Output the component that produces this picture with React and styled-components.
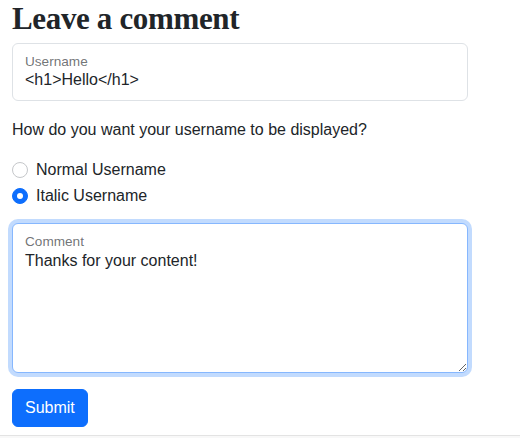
import React from "react";
import styled, { createGlobalStyle } from "styled-components";

const Global = createGlobalStyle`
  * { box-sizing: border-box; }
  html, body { margin: 0; padding: 0; background: #fff; }
  body {
    font-family: "Liberation Sans", Arial, sans-serif;
    font-size: 16px;
    line-height: 1.5;
    color: #212529;
  }
`;

const Page = styled.div`
  display: flex;
  flex-direction: column;
  min-height: 438px;
`;

const Main = styled.main`
  padding: 0 12px;
  width: 480px;
  flex: 1;
`;

const Heading = styled.h1`
  font-family: "Liberation Serif", "Times New Roman", serif;
  font-weight: 700;
  font-size: 31px;
  letter-spacing: -0.35px;
  line-height: 38px;
  margin: 0 0 5px;
  color: #212529;
`;

const Floating = styled.div`
  position: relative;
  margin-bottom: ${(p) => p.$gap || 16}px;
`;

const TextInput = styled.input`
  display: block;
  width: 100%;
  height: 58px;
  padding: 26px 12px 10px;
  font-family: inherit;
  font-size: 16px;
  line-height: 1.5;
  color: #212529;
  background: #fff;
  border: 1px solid #dee2e6;
  border-radius: 6px;
  outline: none;
`;

const TextArea = styled.textarea`
  display: block;
  width: 100%;
  height: 150px;
  padding: 25px 12px 10px;
  font-family: inherit;
  font-size: 16px;
  line-height: 1.5;
  color: #212529;
  background: #fff;
  border: 1px solid #86b7fe;
  border-radius: 6px;
  box-shadow: 0 0 0 4px rgba(13, 110, 253, 0.25);
  outline: none;
  resize: vertical;
`;

const FloatLabel = styled.label`
  position: absolute;
  top: 9px;
  left: 13px;
  font-size: 13.6px;
  line-height: 20px;
  color: rgba(33, 37, 41, 0.65);
  pointer-events: none;
`;

const Question = styled.p`
  margin: 0 0 16px;
`;

const Choices = styled.div`
  display: flex;
  flex-direction: column;
  gap: 2px;
  margin-bottom: 15px;
`;

const Choice = styled.label`
  display: flex;
  align-items: flex-start;
  gap: 8px;
  min-height: 24px;
`;

const Radio = styled.span`
  flex: none;
  width: 16px;
  height: 16px;
  margin-top: 4px;
  border-radius: 50%;
  border: 1px solid ${(p) => (p.$checked ? "#0d6efd" : "#c5c7ca")};
  background: ${(p) => (p.$checked ? "#0d6efd" : "#fff")};
  display: flex;
  align-items: center;
  justify-content: center;
  &::after {
    content: "";
    display: ${(p) => (p.$checked ? "block" : "none")};
    width: 6px;
    height: 6px;
    border-radius: 50%;
    background: #fff;
  }
`;

const Button = styled.button`
  display: inline-block;
  padding: 6px 12px;
  font-family: inherit;
  font-size: 16px;
  line-height: 1.5;
  color: #fff;
  background: #0d6efd;
  border: 1px solid #0d6efd;
  border-radius: 6px;
  cursor: pointer;
`;

const Footer = styled.footer`
  height: 3px;
  border-top: 1px solid #e3e3e3;
  background: #f8f8f8;
`;

export default function App() {
  return (
    <Page>
      <Global />
      <Main>
        <Heading>Leave a comment</Heading>
        <Floating $gap={17}>
          <TextInput id="username" defaultValue="<h1>Hello</h1>" />
          <FloatLabel htmlFor="username">Username</FloatLabel>
        </Floating>
        <Question>How do you want your username to be displayed?</Question>
        <Choices>
          <Choice>
            <Radio />
            Normal Username
          </Choice>
          <Choice>
            <Radio $checked />
            Italic Username
          </Choice>
        </Choices>
        <Floating>
          <TextArea id="comment" defaultValue="Thanks for your content!" />
          <FloatLabel htmlFor="comment">Comment</FloatLabel>
        </Floating>
        <Button type="button">Submit</Button>
      </Main>
      <Footer />
    </Page>
  );
}
